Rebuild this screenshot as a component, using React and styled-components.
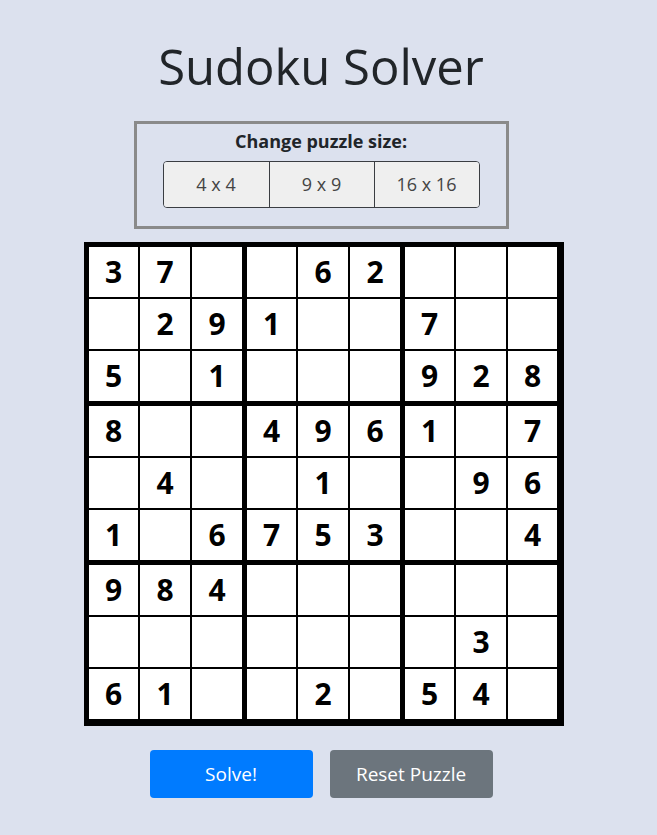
import styled, { createGlobalStyle } from 'styled-components'

const GlobalStyle = createGlobalStyle`
    body {
        margin: 0;
        background-color: #dce1ee;
        font-family: "Open Sans", "Noto Sans", sans-serif;
        color: #212529;
    }
`;

const Page = styled.div`
    width: calc(100% - 15px);
    min-height: 835px;
    display: flex;
    flex-direction: column;
    align-items: center;
`;

const Title = styled.h1`
    margin: 37px 0 25px;
    font-size: 49px;
    font-weight: 500;
    line-height: 1.2;
`;

const SizeBox = styled.div`
    width: 375px;
    box-sizing: border-box;
    border: 3px solid #8a8a8a;
    padding: 5px 0 0;
    height: 108px;
    display: flex;
    flex-direction: column;
    align-items: center;
`;

const SizeLabel = styled.div`
    font-size: 18px;
    font-weight: 700;
    line-height: 24px;
    margin-bottom: 8px;
`;

const ButtonGroup = styled.div`
    display: flex;
    border: 1px solid #3a3d42;
    border-radius: 4px;
    overflow: hidden;
`;

const SizeButton = styled.button`
    width: 105px;
    height: 45px;
    border: none;
    border-left: ${(props) => (props.first ? "none" : "1px solid #3a3d42")};
    background-color: #efefef;
    color: #444;
    font-family: inherit;
    font-size: 18px;
    cursor: pointer;
`;

// board sits a little right of the page centre in the original
const Board = styled.div`
    margin: 13px 0 0 6px;
    display: grid;
    grid-template-columns: repeat(9, auto);
    border: 5px solid #000;
    background: #fff;
`;

const Cell = styled.div`
    width: ${(props) => props.w}px;
    height: 50px;
    display: flex;
    align-items: center;
    justify-content: center;
    border-right: ${(props) => props.right}px solid #000;
    border-bottom: ${(props) => props.bottom}px solid #000;
    font-size: 30px;
    font-weight: 700;
    color: #000;
`;

const Actions = styled.div`
    margin-top: 24px;
    display: flex;
    gap: 17px;
`;

const ActionButton = styled.button`
    width: 163px;
    height: 48px;
    border: none;
    border-radius: 4px;
    background-color: ${(props) => props.bg};
    color: #fff;
    font-family: inherit;
    font-size: 19px;
    cursor: pointer;
`;

const puzzle = [
    "37  62   ",
    " 291  7  ",
    "5 1   928",
    "8  4961 7",
    " 4  1  96",
    "1 6753  4",
    "984      ",
    "       3 ",
    "61  2 54 ",
];

const widths = [49, 50, 50, 49, 50, 50, 49, 50, 49];

const edge = (i) => (i === 2 || i === 5 ? 5 : 2);

const App = () => {
    return (
        <Page>
            <GlobalStyle />
            <Title>Sudoku Solver</Title>
            <SizeBox>
                <SizeLabel>Change puzzle size:</SizeLabel>
                <ButtonGroup>
                    <SizeButton first>4 x 4</SizeButton>
                    <SizeButton>9 x 9</SizeButton>
                    <SizeButton>16 x 16</SizeButton>
                </ButtonGroup>
            </SizeBox>
            <Board>
                {puzzle.map((row, r) =>
                    row.split("").map((ch, c) => (
                        <Cell key={`${r}-${c}`} w={widths[c]} right={edge(c)} bottom={edge(r)}>
                            {ch.trim()}
                        </Cell>
                    ))
                )}
            </Board>
            <Actions>
                <ActionButton bg="#007bff">Solve!</ActionButton>
                <ActionButton bg="#6c757d">Reset Puzzle</ActionButton>
            </Actions>
        </Page>
    )
};

export default App
